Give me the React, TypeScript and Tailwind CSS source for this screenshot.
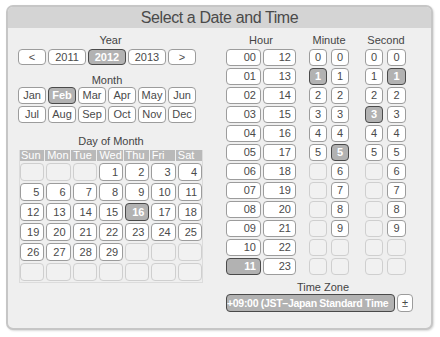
import React from "react";

const font = { fontFamily: '"Liberation Sans", Arial, sans-serif' };

// Single pushbutton in the picker
function Btn({
  label,
  w,
  h = 17,
  selected = false,
  empty = false,
  align = "center",
}: {
  label?: string;
  w: string;
  h?: number;
  selected?: boolean;
  empty?: boolean;
  align?: "center" | "right";
}) {
  const base =
    "shrink-0 rounded-[4px] border text-[11px] flex items-center leading-none " +
    (align === "right" ? "justify-end pr-[4px] " : "justify-center ");
  const look = selected
    ? "bg-[#b2b2b2] border-[#4a4a4a] text-white font-bold"
    : empty
    ? "bg-[#f1f1f1] border-[#cfcfcf]"
    : "bg-white border-[#9c9c9c] text-[#4a4a4a]";
  return (
    <div className={base + look + " " + w} style={{ height: h }}>
      {label}
    </div>
  );
}

function Label({ children }: { children: React.ReactNode }) {
  return (
    <div className="h-[14px] leading-[14px] text-[11px] text-[#444] text-center">
      {children}
    </div>
  );
}

const months = ["Jan", "Feb", "Mar", "Apr", "May", "Jun", "Jul", "Aug", "Sep", "Oct", "Nov", "Dec"];
const weekdays = ["Sun", "Mon", "Tue", "Wed", "Thu", "Fri", "Sat"];

export default function App() {
  // February 2012 starts on a Wednesday
  const days: (number | null)[] = [];
  for (let i = 0; i < 3; i++) days.push(null);
  for (let d = 1; d <= 29; d++) days.push(d);
  while (days.length < 42) days.push(null);

  const rows = Array.from({ length: 12 }, (_, i) => i);

  return (
    <div className="w-[440px] h-[337px] bg-white pt-[5px] pl-[6px]" style={font}>
      <div className="w-[427px] h-[325px] border-2 border-[#c6c6c6] rounded-[7px] bg-[#efefef] overflow-hidden shadow-[1px_1px_2px_rgba(0,0,0,0.15)]">
        <div className="h-[21px] bg-[#d4d4d4] text-center text-[16px] leading-[21px] text-[#4a4a4a] tracking-[-0.4px]">
          Select a Date and Time
        </div>

        <div className="flex pt-[5px] pl-[10px]">
          {/* left: year, month, day */}
          <div className="w-[185px] flex flex-col">
            <Label>Year</Label>
            <div className="flex gap-[2px] mt-[2px]">
              <Btn label="<" w="w-[28px]" h={16} />
              <Btn label="2011" w="w-[38px]" h={16} />
              <Btn label="2012" w="w-[38px]" h={16} selected />
              <Btn label="2013" w="w-[38px]" h={16} />
              <Btn label=">" w="w-[28px]" h={16} />
            </div>

            <div className="mt-[8px] w-[178px]">
              <Label>Month</Label>
            </div>
            <div className="grid grid-cols-6 gap-[2px] w-[178px]">
              {months.map((m) => (
                <Btn key={m} label={m} w="w-full" selected={m === "Feb"} />
              ))}
            </div>

            <div className="mt-[11px] pl-[1px]">
              <Label>Day of Month</Label>
            </div>
            <div className="ml-[1px] w-[184px] mt-[2px] border-x border-b border-[#dcdcdc]">
              <div className="grid grid-cols-7 gap-[1px] bg-[#b9b9b9] h-[11px]">
                {weekdays.map((d) => (
                  <div key={d} className="text-[11px] leading-[11px] text-white pl-[1px] bg-[#b9b9b9] border-r border-[#efefef] last:border-r-0">
                    {d}
                  </div>
                ))}
              </div>
              <div className="grid grid-cols-7 gap-x-[2px] gap-y-[2px] pt-[2px] pb-[1px]">
                {days.map((d, i) =>
                  d === null ? (
                    <Btn key={i} w="w-full" h={18} empty />
                  ) : (
                    <Btn key={i} label={String(d)} w="w-full" h={18} align="right" selected={d === 16} />
                  )
                )}
              </div>
            </div>
          </div>

          {/* right: hour, minute, second, time zone */}
          <div className="ml-[23px] flex flex-col">
            <div className="flex">
              <div className="flex flex-col w-[70px]">
                <Label>Hour</Label>
                <div className="flex flex-col gap-[2px] mt-[2px]">
                  {rows.map((r) => (
                    <div key={r} className="flex gap-[2px]">
                      <Btn label={String(r).padStart(2, "0")} w="w-[35px]" align="right" selected={r === 11} />
                      <Btn label={String(r + 12)} w="w-[33px]" align="right" />
                    </div>
                  ))}
                </div>
              </div>

              <div className="flex flex-col ml-[13px] w-[40px]">
                <Label>Minute</Label>
                <div className="flex flex-col gap-[2px] mt-[2px]">
                  {rows.map((r) => (
                    <div key={r} className="flex gap-[4px]">
                      {r < 6 ? (
                        <Btn label={String(r)} w="w-[18px]" selected={r === 1} />
                      ) : (
                        <Btn w="w-[18px]" empty />
                      )}
                      {r < 10 ? (
                        <Btn label={String(r)} w="w-[18px]" selected={r === 5} />
                      ) : (
                        <Btn w="w-[18px]" empty />
                      )}
                    </div>
                  ))}
                </div>
              </div>

              <div className="flex flex-col ml-[16px] w-[42px]">
                <Label>Second</Label>
                <div className="flex flex-col gap-[2px] mt-[2px]">
                  {rows.map((r) => (
                    <div key={r} className="flex gap-[4px]">
                      {r < 6 ? (
                        <Btn label={String(r)} w="w-[18px]" selected={r === 3} />
                      ) : (
                        <Btn w="w-[18px]" empty />
                      )}
                      {r < 10 ? (
                        <Btn label={String(r)} w="w-[19px]" selected={r === 1} />
                      ) : (
                        <Btn w="w-[19px]" empty />
                      )}
                    </div>
                  ))}
                </div>
              </div>
            </div>

            <div className="mt-[5px] w-[194px]">
              <Label>Time Zone</Label>
            </div>
            <div className="flex gap-[2px]">
              <div className="w-[169px] h-[18px] rounded-[4px] border border-[#4a4a4a] bg-[#b2b2b2] text-white font-bold text-[10.5px] tracking-[-0.3px] leading-[16px] whitespace-nowrap overflow-hidden">
                +09:00 (JST–Japan Standard Time
              </div>
              <Btn label="±" w="w-[16px]" h={18} />
            </div>
          </div>
        </div>
      </div>
    </div>
  );
}
